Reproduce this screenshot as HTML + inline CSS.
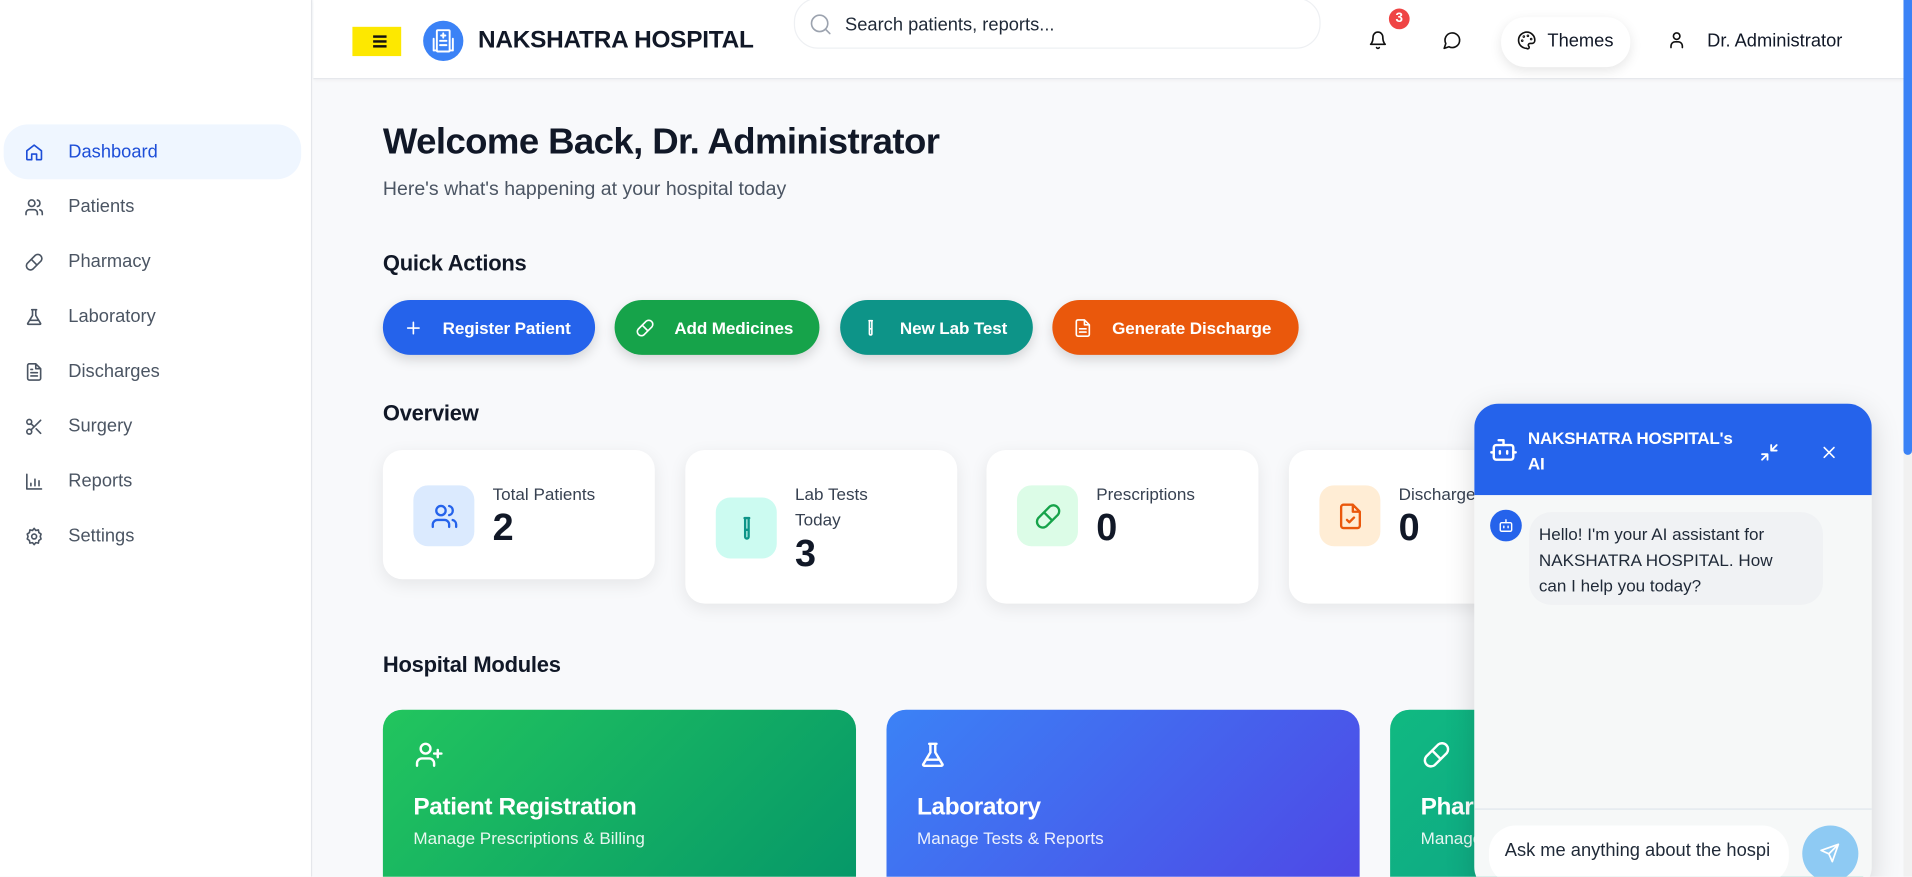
<!DOCTYPE html>
<html><head><meta charset="utf-8">
<style>
*{box-sizing:border-box;margin:0;padding:0}
html,body{width:1912px;height:877px;overflow:hidden;background:#f8f9fb;font-family:"Liberation Sans",sans-serif}
#s{position:absolute;left:0;top:0;width:1568px;height:719px;transform:scale(1.2194);transform-origin:0 0;overflow:hidden;background:#f8f9fb}
.a{position:absolute}
svg{display:block}
.ic{fill:none;stroke:currentColor;stroke-width:2;stroke-linecap:round;stroke-linejoin:round}
.nav{position:absolute;left:3px;width:244px;height:45px;display:flex;align-items:center;font-size:15px;color:#4b5563}
.nav svg{position:absolute;left:17px;width:16px;height:16px;color:#4b5563}
.nav span{position:absolute;left:53px;top:14px}
.btn{position:absolute;top:246px;height:45px;border-radius:23px;color:#fff;font-weight:bold;font-size:14px;display:flex;align-items:center;box-shadow:0 4px 10px rgba(0,0,0,.15)}
.btn svg{position:absolute;left:17px;width:16px;height:16px;color:#fff}
.btn span{position:absolute;left:49px;top:15px;letter-spacing:-.1px}
.card{position:absolute;top:369px;width:223px;background:#fff;border-radius:16px;box-shadow:0 4px 14px rgba(0,0,0,.08)}
.ib{position:absolute;left:25px;width:50px;height:50px;border-radius:12px;display:flex;align-items:center;justify-content:center}
.ib svg{width:23px;height:23px}
.lb{position:absolute;left:90px;top:26px;font-size:14px;color:#374151;line-height:21px}
.vl{position:absolute;left:90px;font-size:31px;font-weight:bold;color:#111827}
.mod{position:absolute;top:582px;width:388px;height:160px;border-radius:16px;color:#fff}
.mod svg{position:absolute;left:26px;top:25px;width:24px;height:24px;color:#fff}
.mod b{position:absolute;left:25px;top:69px;font-size:20px;letter-spacing:-.3px}
.mod i{position:absolute;left:25px;top:97px;font-size:14px;font-style:normal;opacity:.9}
h2{position:absolute;left:314px;font-size:18px;font-weight:bold;color:#111827;letter-spacing:-.2px}
</style></head><body><div id="s">

<div class="a" style="left:0;top:0;width:256px;height:719px;background:#fff;border-right:1px solid #e5e7eb"></div>
<div class="nav" style="top:102px;background:#eff6ff;border-radius:20px;color:#1d4ed8"><svg class="ic" viewBox="0 0 24 24" style="color:#1d4ed8"><path d="M3 10l9-7 9 7v10a1 1 0 0 1-1 1h-5v-7h-6v7H4a1 1 0 0 1-1-1z"/></svg><span>Dashboard</span></div>
<div class="nav" style="top:147px"><svg class="ic" viewBox="0 0 24 24"><circle cx="9" cy="7" r="4"/><path d="M2 21v-2a4 4 0 0 1 4-4h6a4 4 0 0 1 4 4v2M16 3.1a4 4 0 0 1 0 7.8M22 21v-2a4 4 0 0 0-3-3.9"/></svg><span>Patients</span></div>
<div class="nav" style="top:192px"><svg class="ic" viewBox="0 0 24 24"><path d="M10.5 20.5l10-10a5 5 0 0 0-7-7l-10 10a5 5 0 0 0 7 7zM8.5 8.5l7 7"/></svg><span>Pharmacy</span></div>
<div class="nav" style="top:237px"><svg class="ic" viewBox="0 0 24 24"><path d="M9 3h6M10 3v7L4 20a1 1 0 0 0 1 1h14a1 1 0 0 0 1-1l-6-10V3M6.5 16h11"/></svg><span>Laboratory</span></div>
<div class="nav" style="top:282px"><svg class="ic" viewBox="0 0 24 24"><path d="M14 2H6a2 2 0 0 0-2 2v16a2 2 0 0 0 2 2h12a2 2 0 0 0 2-2V8zM14 2v6h6M8 13h8M8 17h8M8 9h2"/></svg><span>Discharges</span></div>
<div class="nav" style="top:327px"><svg class="ic" viewBox="0 0 24 24"><circle cx="6" cy="6" r="3"/><circle cx="6" cy="18" r="3"/><path d="M20 4L8.1 15.9M14.5 14.5L20 20M8.1 8.1L12 12"/></svg><span>Surgery</span></div>
<div class="nav" style="top:372px"><svg class="ic" viewBox="0 0 24 24"><path d="M3 3v18h18M8 17v-3M13 17V9M18 17v-6"/></svg><span>Reports</span></div>
<div class="nav" style="top:417px"><svg class="ic" viewBox="0 0 24 24"><circle cx="12" cy="12" r="3"/><path d="M12 2l2 2.5 3.2-.6.6 3.2L20.5 9 19.5 12l1 3-2.7 1.9-.6 3.2-3.2-.6L12 22l-2-2.5-3.2.6-.6-3.2L3.5 15l1-3-1-3 2.7-1.9.6-3.2 3.2.6z"/></svg><span>Settings</span></div>

<div class="a" style="left:257px;top:0;width:1304px;height:65px;background:#fff;border-bottom:1px solid #e5e7eb;box-shadow:0 1px 3px rgba(0,0,0,.04)"></div>
<div class="a" style="left:289px;top:22px;width:40px;height:24px;background:#fde800"></div>
<div class="a" style="left:306px;top:29px;width:11px;height:1.5px;background:#111;box-shadow:0 4px 0 #111,0 8px 0 #111"></div>
<div class="a" style="left:347px;top:17px;width:33px;height:33px;border-radius:50%;background:#3b82f6"></div>
<svg class="a ic" viewBox="0 0 24 24" style="left:353px;top:23px;width:21px;height:21px;color:#fff;stroke-width:1.8"><rect x="6" y="2" width="12" height="20" rx="1"/><path d="M12 5v4M10 7h4M9 12h6M9 16h6M3 10v11h3M21 10v11h-3"/></svg>
<div class="a" style="left:392px;top:22px;font-size:20px;font-weight:bold;color:#111827;letter-spacing:-.2px">NAKSHATRA HOSPITAL</div>
<div class="a" style="left:651px;top:-2px;width:432px;height:42px;border:1px solid #eef0f3;border-radius:20px;background:#fff"></div>
<svg class="a ic" viewBox="0 0 24 24" style="left:663px;top:10px;width:20px;height:20px;color:#9ca3af;stroke-width:1.6"><circle cx="11" cy="11" r="8"/><path d="M21 21l-4.3-4.3"/></svg>
<div class="a" style="left:693px;top:12px;font-size:15px;color:#1f2937">Search patients, reports...</div>
<svg class="a ic" viewBox="0 0 24 24" style="left:1122px;top:25px;width:16px;height:16px;color:#111"><path d="M6 8a6 6 0 0 1 12 0c0 7 3 9 3 9H3s3-2 3-9M10.3 21a1.9 1.9 0 0 0 3.4 0"/></svg>
<div class="a" style="left:1139px;top:7px;width:17px;height:17px;border-radius:50%;background:#ef4444;color:#fff;font-size:11px;font-weight:bold;text-align:center;line-height:17px">3</div>
<svg class="a ic" viewBox="0 0 24 24" style="left:1183px;top:25px;width:16px;height:16px;color:#111"><path d="M7.9 20A9 9 0 1 0 4 16.1L2 22z"/></svg>
<div class="a" style="left:1231px;top:14px;width:106px;height:41px;border-radius:20px;background:#fff;box-shadow:0 3px 10px rgba(0,0,0,.1)"></div>
<svg class="a ic" viewBox="0 0 24 24" style="left:1244px;top:25px;width:16px;height:16px;color:#111"><path d="M12 22a10 10 0 1 1 10-10c0 2.8-2.2 4-4 4h-2a2 2 0 0 0-1.5 3.3A1.6 1.6 0 0 1 12 22z"/><circle cx="13.5" cy="6.5" r=".6"/><circle cx="17.5" cy="10.5" r=".6"/><circle cx="8.5" cy="7.5" r=".6"/><circle cx="6.5" cy="12.5" r=".6"/></svg>
<div class="a" style="left:1269px;top:25px;font-size:15px;color:#111827">Themes</div>
<svg class="a ic" viewBox="0 0 24 24" style="left:1367px;top:25px;width:16px;height:16px;color:#111"><circle cx="12" cy="7" r="4"/><path d="M5 21v-2a5 5 0 0 1 5-5h4a5 5 0 0 1 5 5v2"/></svg>
<div class="a" style="left:1400px;top:25px;font-size:15px;color:#111827">Dr. Administrator</div>

<div class="a" style="left:314px;top:100px;font-size:30px;font-weight:bold;color:#111827;letter-spacing:-.5px">Welcome Back, Dr. Administrator</div>
<div class="a" style="left:314px;top:147px;font-size:16px;color:#4b5563">Here's what's happening at your hospital today</div>
<h2 style="top:206px">Quick Actions</h2>
<div class="btn" style="left:314px;width:174px;background:#2563eb"><svg class="ic" viewBox="0 0 24 24"><path d="M12 5v14M5 12h14"/></svg><span>Register Patient</span></div>
<div class="btn" style="left:504px;width:168px;background:#16a34a"><svg class="ic" viewBox="0 0 24 24"><path d="M10.5 20.5l10-10a5 5 0 0 0-7-7l-10 10a5 5 0 0 0 7 7zM8.5 8.5l7 7"/></svg><span>Add Medicines</span></div>
<div class="btn" style="left:689px;width:158px;background:#0d9488"><svg class="ic" viewBox="0 0 24 24"><path d="M10 3h4M10.5 3v16a1.5 1.5 0 0 0 3 0V3M10.5 13h3"/></svg><span>New Lab Test</span></div>
<div class="btn" style="left:863px;width:202px;background:#ea580c"><svg class="ic" viewBox="0 0 24 24"><path d="M14 2H6a2 2 0 0 0-2 2v16a2 2 0 0 0 2 2h12a2 2 0 0 0 2-2V8zM14 2v6h6M8 13h8M8 17h8"/></svg><span>Generate Discharge</span></div>

<h2 style="top:329px">Overview</h2>
<div class="card" style="left:314px;height:106px"><div class="ib" style="top:29px;background:#dbeafe;color:#2563eb"><svg class="ic" viewBox="0 0 24 24"><circle cx="9" cy="7" r="4"/><path d="M2 21v-2a4 4 0 0 1 4-4h6a4 4 0 0 1 4 4v2M16 3.1a4 4 0 0 1 0 7.8M22 21v-2a4 4 0 0 0-3-3.9"/></svg></div><div class="lb">Total Patients</div><div class="vl" style="top:46px">2</div></div>
<div class="card" style="left:562px;height:126px"><div class="ib" style="top:39px;background:#ccfbf1;color:#0d9488"><svg class="ic" viewBox="0 0 24 24"><path d="M10 3h4M10.5 3v16a1.5 1.5 0 0 0 3 0V3M10.5 13h3"/></svg></div><div class="lb">Lab Tests<br>Today</div><div class="vl" style="top:67px">3</div></div>
<div class="card" style="left:809px;height:126px"><div class="ib" style="top:29px;background:#dcfce7;color:#16a34a"><svg class="ic" viewBox="0 0 24 24"><path d="M10.5 20.5l10-10a5 5 0 0 0-7-7l-10 10a5 5 0 0 0 7 7zM8.5 8.5l7 7"/></svg></div><div class="lb">Prescriptions</div><div class="vl" style="top:46px">0</div></div>
<div class="card" style="left:1057px;height:126px"><div class="ib" style="top:29px;background:#ffedd5;color:#ea580c"><svg class="ic" viewBox="0 0 24 24"><path d="M14 2H6a2 2 0 0 0-2 2v16a2 2 0 0 0 2 2h12a2 2 0 0 0 2-2V8zM14 2v6h6M9 15l2 2 4-4"/></svg></div><div class="lb">Discharges</div><div class="vl" style="top:46px">0</div></div>

<h2 style="top:535px">Hospital Modules</h2>
<div class="mod" style="left:314px;background:linear-gradient(135deg,#22c55e,#059669)"><svg class="ic" viewBox="0 0 24 24"><circle cx="9" cy="7" r="4"/><path d="M2 21v-2a4 4 0 0 1 4-4h6a4 4 0 0 1 4 4v2M19 8v6M16 11h6"/></svg><b>Patient Registration</b><i>Manage Prescriptions &amp; Billing</i></div>
<div class="mod" style="left:727px;background:linear-gradient(135deg,#3b82f6,#4f46e5)"><svg class="ic" viewBox="0 0 24 24"><path d="M9 3h6M10 3v7L4 20a1 1 0 0 0 1 1h14a1 1 0 0 0 1-1l-6-10V3M6.5 16h11"/></svg><b>Laboratory</b><i>Manage Tests &amp; Reports</i></div>
<div class="mod" style="left:1140px;background:linear-gradient(135deg,#10b981,#0d9488)"><svg class="ic" viewBox="0 0 24 24"><path d="M10.5 20.5l10-10a5 5 0 0 0-7-7l-10 10a5 5 0 0 0 7 7zM8.5 8.5l7 7"/></svg><b>Pharmacy</b><i>Manage Medicines</i></div>

<div class="a" style="left:1209px;top:331px;width:326px;height:400px;border-radius:20px;background:#f6f8f8;box-shadow:0 6px 24px rgba(0,0,0,.15);overflow:hidden">
 <div class="a" style="left:0;top:0;width:326px;height:75px;background:#2563eb"></div>
 <svg class="a ic" viewBox="0 0 24 24" style="left:12px;top:26px;width:24px;height:24px;color:#fff"><rect x="4" y="8" width="16" height="12" rx="2"/><path d="M12 8V4H8M2 14h2M20 14h2M9 13v2M15 13v2"/></svg>
 <div class="a" style="left:44px;top:18px;font-size:14px;font-weight:bold;color:#fff;line-height:21px;letter-spacing:-.2px">NAKSHATRA HOSPITAL's<br>AI</div>
 <svg class="a ic" viewBox="0 0 24 24" style="left:233px;top:31px;width:18px;height:18px;color:#fff"><path d="M4 20l6-6M4 14h6v6M20 4l-6 6M14 4v6h6"/></svg>
 <svg class="a ic" viewBox="0 0 24 24" style="left:283px;top:32px;width:16px;height:16px;color:#fff"><path d="M6 6l12 12M18 6L6 18"/></svg>
 <div class="a" style="left:13px;top:87px;width:26px;height:26px;border-radius:50%;background:#2563eb"></div>
 <svg class="a ic" viewBox="0 0 24 24" style="left:19px;top:93px;width:14px;height:14px;color:#fff"><rect x="4" y="8" width="16" height="12" rx="2"/><path d="M12 8V4M9 13v2M15 13v2"/></svg>
 <div class="a" style="left:45px;top:89px;width:241px;height:76px;border-radius:18px;background:#f0f2f4"></div>
 <div class="a" style="left:53px;top:97px;font-size:14px;color:#1f2937;line-height:21px">Hello! I'm your AI assistant for<br>NAKSHATRA HOSPITAL. How<br>can I help you today?</div>
 <div class="a" style="left:0;top:332px;width:326px;height:1px;background:#dfe6ec"></div>
 <div class="a" style="left:12px;top:346px;width:246px;height:48px;border-radius:22px;background:#fff"></div>
 <div class="a" style="left:25px;top:358px;font-size:15px;color:#1f2937;white-space:nowrap">Ask me anything about the hospi</div>
 <div class="a" style="left:269px;top:346px;width:46px;height:46px;border-radius:50%;background:#8ecaf3"></div>
 <svg class="a ic" viewBox="0 0 24 24" style="left:283px;top:360px;width:17px;height:17px;color:#fff"><path d="M22 2L11 13M22 2l-7 20-4-9-9-4z"/></svg>
</div>

<div class="a" style="left:1561px;top:0;width:7px;height:719px;background:#f1f1f1"></div>
<div class="a" style="left:1561px;top:0;width:7px;height:373px;background:#3b82f6;border-radius:0 0 4px 4px"></div>
</div></body></html>
